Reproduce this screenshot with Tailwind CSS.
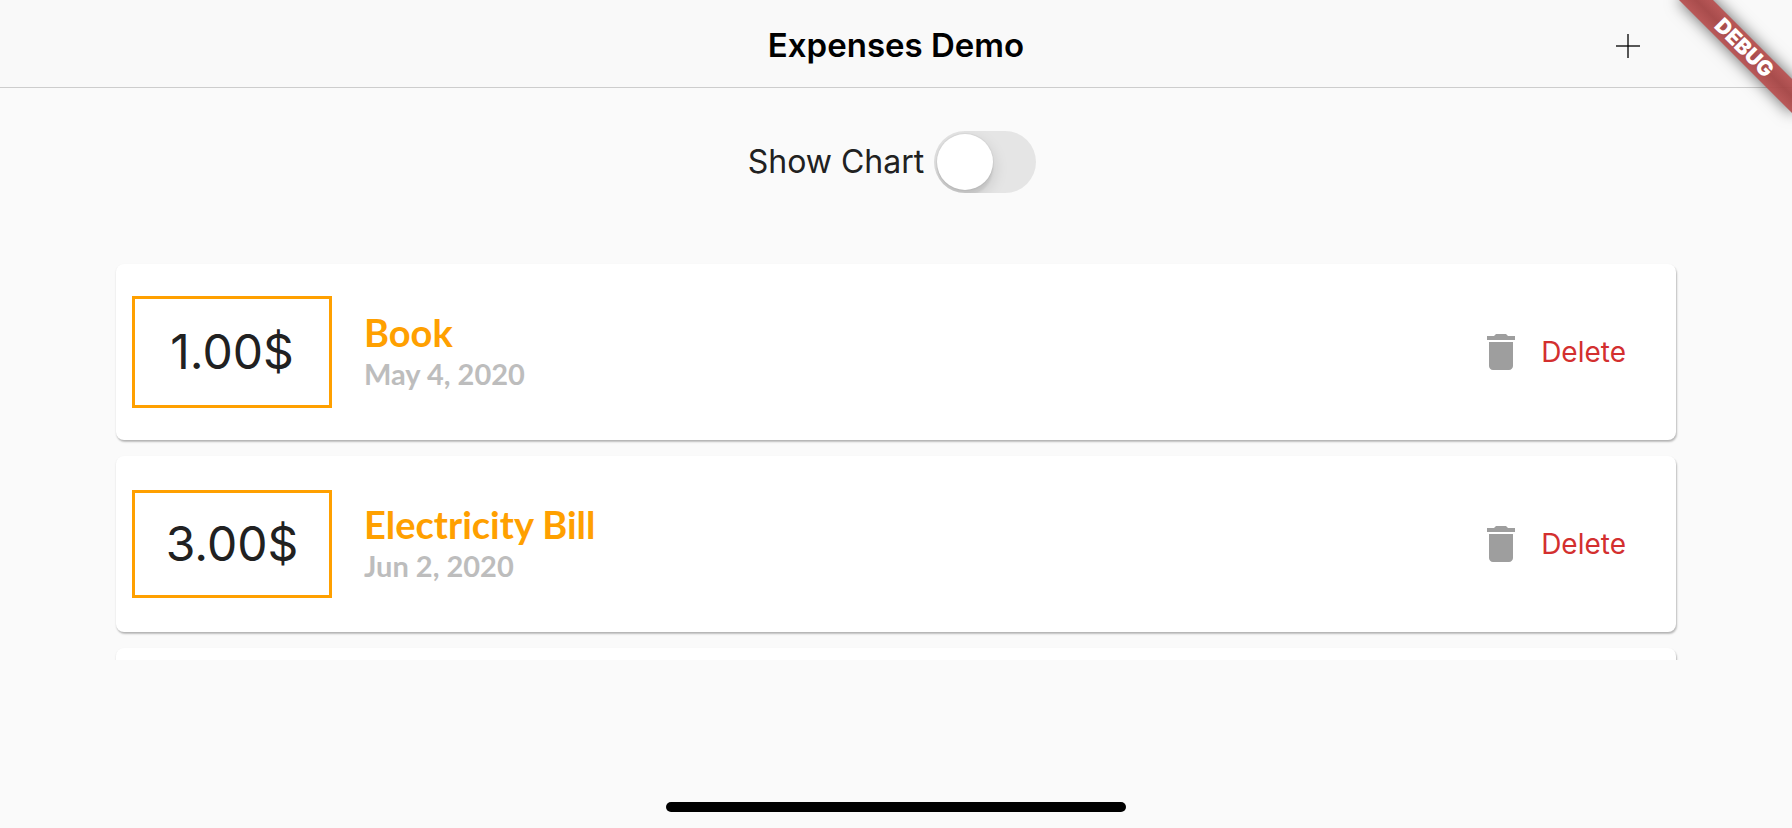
<!DOCTYPE html>
<html lang="en">
<head>
<meta charset="utf-8">
<meta name="viewport" content="width=device-width, initial-scale=1">
<title>Expenses Demo</title>
<script src="https://cdn.jsdelivr.net/npm/@tailwindcss/browser@4"></script>
</head>
<body class="relative flex h-screen flex-col overflow-hidden bg-[#fafafa] font-['Inter',sans-serif] text-[#212121]">

<header class="grid h-22 shrink-0 grid-cols-[1fr_auto_1fr] items-center border-b border-[#cdcdcd] bg-[#f9f9f9] px-38">
  <h1 class="col-start-2 mt-0.5 text-[33px] leading-10 font-semibold text-black">Expenses Demo</h1>
  <button type="button" aria-label="Add expense" class="mt-1 justify-self-end">
    <svg class="size-6" viewBox="0 0 24 24" fill="none" stroke="#000" stroke-opacity=".65" stroke-width="2"><path d="M12 0v24"/><path d="M0 12h24"/></svg>
  </button>
</header>

<main class="flex min-h-0 flex-1 flex-col px-29">
  <div class="flex h-37 shrink-0 items-center justify-center gap-2.5">
    <label for="show-chart" class="text-[32px] leading-10">Show Chart</label>
    <input id="show-chart" type="checkbox" role="switch" class="relative mr-2 h-[62px] w-[102px] appearance-none overflow-hidden rounded-full bg-[#e5e5e5] before:absolute before:top-[3px] before:left-[3px] before:size-14 before:rounded-full before:bg-white before:shadow-[0_6px_16px_rgba(0,0,0,0.15),0_6px_2px_rgba(0,0,0,0.06),0_0_1px_1px_rgba(0,0,0,0.04)] checked:bg-[#34c759] checked:before:left-[43px]">
  </div>

  <ul class="-mx-2 flex min-h-0 flex-1 flex-col gap-4 overflow-hidden px-2 pt-7">
    <li class="flex h-44 shrink-0 items-center rounded-lg bg-white px-4 shadow-[1px_2px_2px_rgba(0,0,0,0.22),0_1px_2px_rgba(0,0,0,0.1)]">
      <div class="flex h-28 w-50 items-center justify-center border-3 border-[#ffa000] text-[48px] leading-14">1.00$</div>
      <div class="ml-8 flex-1 font-['Lato',sans-serif] font-bold">
        <h2 class="text-[38px] leading-11 text-[#ffa000]">Book</h2>
        <p class="text-[29px] leading-10 text-[#bdbdbd]">May 4, 2020</p>
      </div>
      <button type="button" class="mr-8.5 flex items-center gap-4 text-[28px] leading-9 text-[#d32f2f]">
        <svg class="size-12" viewBox="0 0 24 24" fill="#9e9e9e" aria-hidden="true"><path d="M6 19c0 1.100.9 2 2 2h8c1.100 0 2-.9 2-2V7H6v12zM19 4h-3.500l-1-1h-5l-1 1H5v2h14V4z"/></svg>
        Delete
      </button>
    </li>
    <li class="flex h-44 shrink-0 items-center rounded-lg bg-white px-4 shadow-[1px_2px_2px_rgba(0,0,0,0.22),0_1px_2px_rgba(0,0,0,0.1)]">
      <div class="flex h-27 w-50 items-center justify-center border-3 border-[#ffa000] text-[48px] leading-14">3.00$</div>
      <div class="ml-8 flex-1 font-['Lato',sans-serif] font-bold">
        <h2 class="text-[38px] leading-11 text-[#ffa000]">Electricity Bill</h2>
        <p class="text-[29px] leading-10 text-[#bdbdbd]">Jun 2, 2020</p>
      </div>
      <button type="button" class="mr-8.5 flex items-center gap-4 text-[28px] leading-9 text-[#d32f2f]">
        <svg class="size-12" viewBox="0 0 24 24" fill="#9e9e9e" aria-hidden="true"><path d="M6 19c0 1.100.9 2 2 2h8c1.100 0 2-.9 2-2V7H6v12zM19 4h-3.500l-1-1h-5l-1 1H5v2h14V4z"/></svg>
        Delete
      </button>
    </li>
    <li class="h-44 shrink-0 rounded-lg bg-white shadow-[1px_2px_2px_rgba(0,0,0,0.22),0_1px_2px_rgba(0,0,0,0.1)]"></li>
  </ul>
</main>

<footer class="flex h-42 shrink-0 items-end justify-center pb-4">
  <div class="h-2.5 w-115 rounded-full bg-black"></div>
</footer>

<!-- Corner ribbon -->
<div class="pointer-events-none absolute top-0 right-0 size-40 overflow-hidden">
  <div class="absolute top-9 right-[-32px] flex h-6 w-40 rotate-45 items-center justify-center bg-linear-to-b from-[#b65050]/95 via-[#a44343]/95 to-[#b65050]/95 text-[21px] leading-6 font-black text-white shadow-[0_0_16px_rgba(0,0,0,0.6)]">DEBUG</div>
</div>
</body>
</html>
